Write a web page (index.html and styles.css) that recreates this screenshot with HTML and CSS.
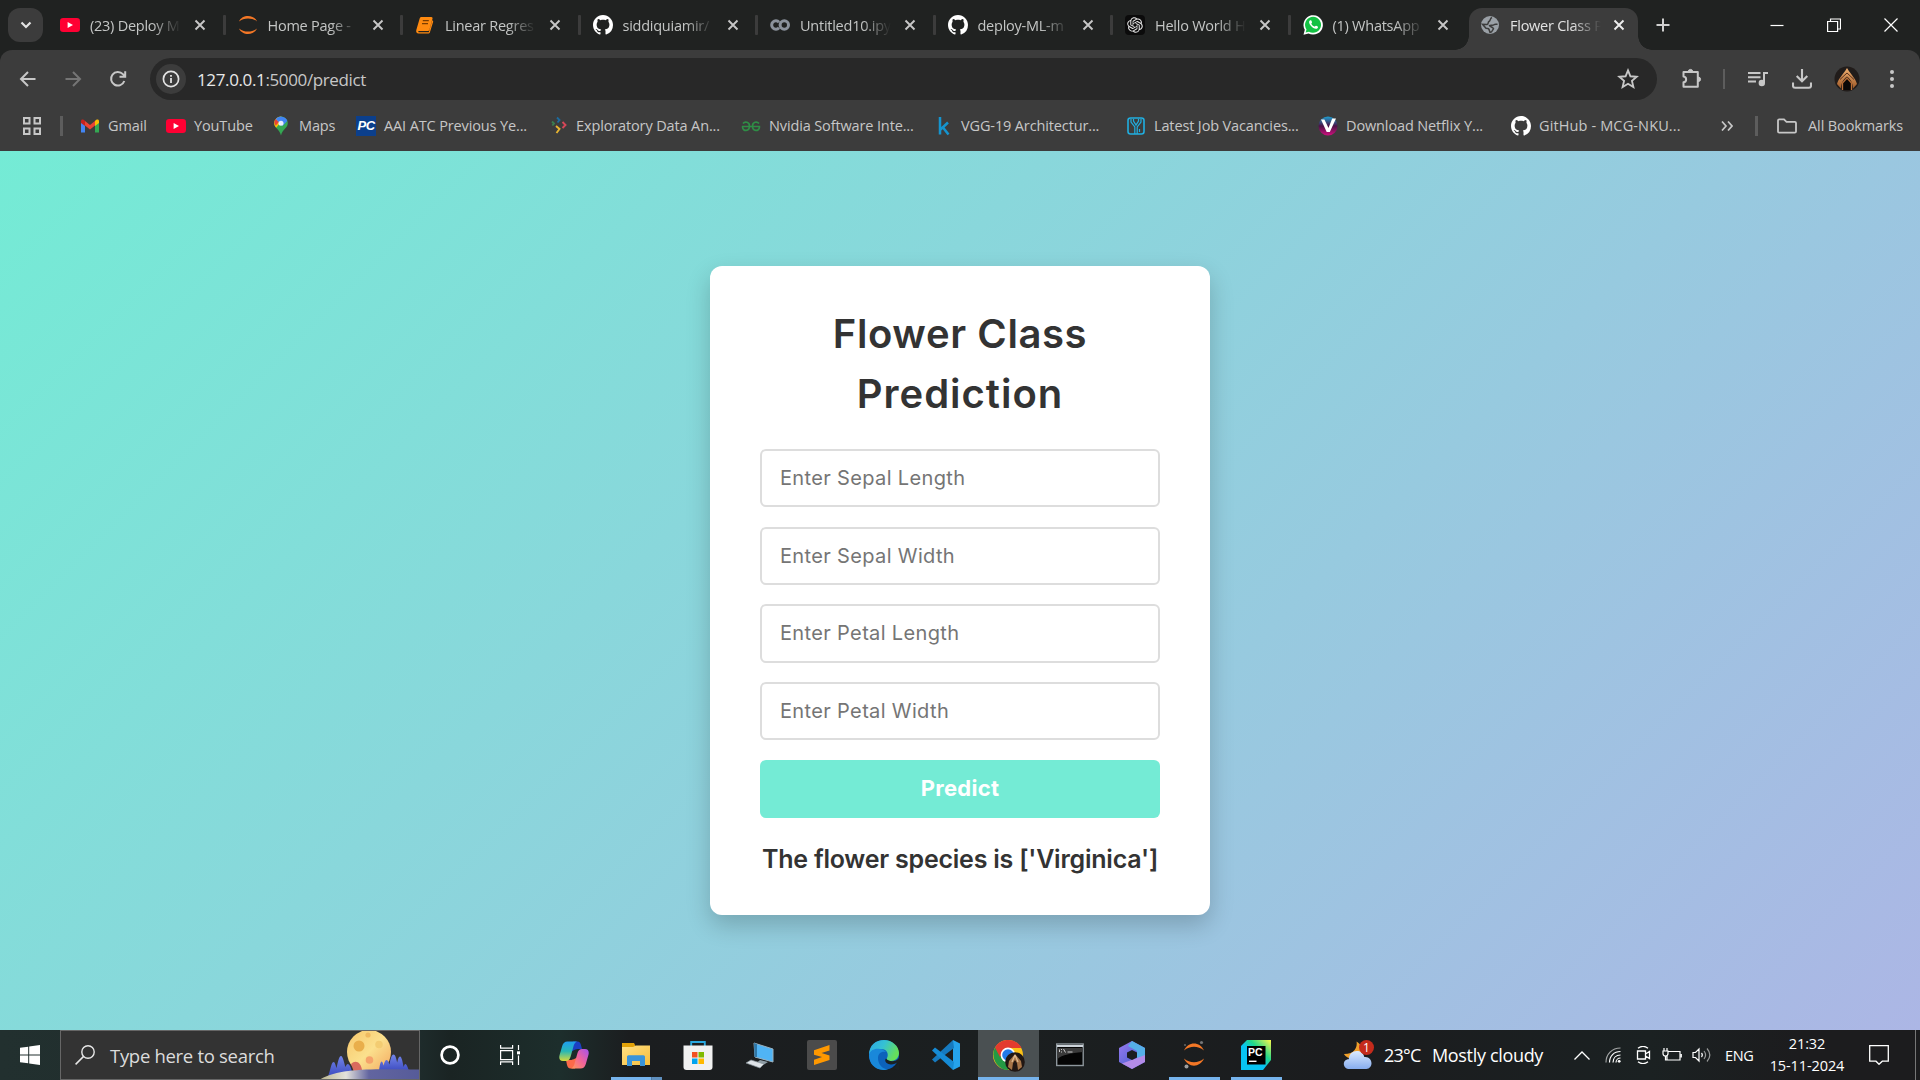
FILE: index.html
```html
<!DOCTYPE html>
<html lang="en">
<head>
<meta charset="utf-8">
<title>Flower Class Prediction</title>
<link rel="stylesheet" href="styles.css">
</head>
<body>
<svg class="defs" width="0" height="0" aria-hidden="true">
  <defs>
    <symbol id="x" viewBox="0 0 12 12"><path d="M1.5 1.5l9 9M10.5 1.5l-9 9" stroke="currentColor" stroke-width="1.9" fill="none"/></symbol>
    <symbol id="youtube" viewBox="0 0 20 20"><rect y="3" width="20" height="14" rx="3.2" fill="#ff0033"/><path d="M7.6 7l5.4 3-5.4 3z" fill="#fff"/></symbol>
    <symbol id="github" viewBox="0 0 16 16"><path fill="#fff" d="M8 0C3.58 0 0 3.58 0 8c0 3.54 2.29 6.53 5.47 7.59.4.07.55-.17.55-.38 0-.19-.01-.82-.01-1.49-2.01.37-2.53-.49-2.69-.94-.09-.23-.48-.94-.82-1.13-.28-.15-.68-.52-.01-.53.63-.01 1.08.58 1.23.82.72 1.21 1.87.87 2.33.66.07-.52.28-.87.51-1.07-1.78-.2-3.64-.89-3.64-3.95 0-.87.31-1.59.82-2.15-.08-.2-.36-1.02.08-2.12 0 0 .67-.21 2.2.82.64-.18 1.32-.27 2-.27s1.36.09 2 .27c1.53-1.04 2.2-.82 2.2-.82.44 1.1.16 1.92.08 2.12.51.56.82 1.27.82 2.15 0 3.07-1.87 3.75-3.65 3.95.29.25.54.73.54 1.48 0 1.07-.01 1.93-.01 2.2 0 .21.15.46.55.38A8.01 8.01 0 0 0 16 8c0-4.42-3.58-8-8-8z"/></symbol>
    <linearGradient id="moon" x1="0" y1="0" x2="1" y2="1"><stop offset="0" stop-color="#f7c66a"/><stop offset=".5" stop-color="#fbe08d"/><stop offset="1" stop-color="#f3a65e"/></linearGradient>
    <linearGradient id="hill" x1="0" y1="0" x2="1" y2="0"><stop offset="0" stop-color="#b9b48a"/><stop offset=".27" stop-color="#e4e2dc"/><stop offset=".5" stop-color="#6265a0"/><stop offset="1" stop-color="#565b99"/></linearGradient>
    <linearGradient id="tree" x1="0" y1="0" x2="0" y2="1"><stop offset="0" stop-color="#7385ea"/><stop offset="1" stop-color="#3d4cc0"/></linearGradient>
    <linearGradient id="cop1" x1="0" y1="0" x2="0" y2="1"><stop offset="0" stop-color="#1f9cf0"/><stop offset=".5" stop-color="#28b7b5"/><stop offset="1" stop-color="#d8d93a"/></linearGradient>
    <linearGradient id="cop2" x1="1" y1="0" x2="0" y2="1"><stop offset="0" stop-color="#a452ef"/><stop offset=".5" stop-color="#f0639b"/><stop offset="1" stop-color="#ff9a55"/></linearGradient>
    <linearGradient id="edge1" x1="0" y1="0" x2="1" y2=".4"><stop offset="0" stop-color="#2ba8e6"/><stop offset=".5" stop-color="#35c1d4"/><stop offset="1" stop-color="#66e05a"/></linearGradient>
    <linearGradient id="m1" x1="0" y1="0" x2="1" y2="1"><stop offset="0" stop-color="#9a7bf0"/><stop offset="1" stop-color="#3558c8"/></linearGradient>
    <linearGradient id="pc" x1="0" y1="1" x2="1" y2="0"><stop offset=".45" stop-color="#07c3f2"/><stop offset=".65" stop-color="#21d789"/><stop offset="1" stop-color="#fcf84a"/></linearGradient>
    <linearGradient id="cloud" x1="0" y1="0" x2="0" y2="1"><stop offset="0" stop-color="#dcebff"/><stop offset="1" stop-color="#86acee"/></linearGradient>
    <linearGradient id="folder" x1="0" y1="0" x2="1" y2="1"><stop offset="0" stop-color="#ffe083"/><stop offset="1" stop-color="#f8be3d"/></linearGradient>
    <linearGradient id="vee" x1="0" y1="0" x2="0" y2="1"><stop offset="0" stop-color="#1d9fd0"/><stop offset=".5" stop-color="#4a1246"/><stop offset="1" stop-color="#d0107e"/></linearGradient>
    <linearGradient id="gold" x1="0" y1="0" x2="0" y2="1"><stop offset="0" stop-color="#f0b070"/><stop offset="1" stop-color="#a05a28"/></linearGradient>
  </defs>
</svg>

<header class="browser">
  <div class="tabstrip">
    <button class="tab-search"><svg width="14" height="14" viewBox="0 0 14 14"><path d="M2.5 4.5L7 9l4.500-4.500" fill="none" stroke="#e3e3e3" stroke-width="2.200"/></svg></button>
    <div class="tab"><svg class="fav"><use href="#youtube"/></svg><span class="tab-title">(23) Deploy M</span><svg class="close"><use href="#x"/></svg></div>
    <div class="tab"><svg class="fav" viewBox="0 0 20 20"><path d="M1 6.500C4-.8 16-.8 19 6.500 14.500 2.400 5.500 2.400 1 6.500zM1 13.500c3 7.300 15 7.300 18 0-4.500 4.100-13.500 4.100-18 0z" fill="#f37726"/></svg><span class="tab-title">Home Page -</span><svg class="close"><use href="#x"/></svg></div>
    <div class="tab"><svg class="fav" viewBox="0 0 20 20"><path d="M6.500 2h9.800c1 0 1.500.8 1.200 1.700L14.400 14.800c-.3.8-.9 1.200-1.800 1.200H3.700c-.8.4-.4 1.300.5 1.300h9.600l3.500-12 .4.300c.5.400.6.900.4 1.500L15 17c-.3 1-1 1.500-2 1.500H3.600C1.800 18.500.7 17 1.300 15L4.600 3.700C4.900 2.600 5.500 2 6.500 2z" fill="#ff8a10"/><path d="M7.800 5.700h6M7 8.700h6" stroke="#7c3c00" stroke-width="1.200"/></svg><span class="tab-title">Linear Regres</span><svg class="close"><use href="#x"/></svg></div>
    <div class="tab"><svg class="fav"><use href="#github"/></svg><span class="tab-title">siddiquiamir/</span><svg class="close"><use href="#x"/></svg></div>
    <div class="tab"><svg class="fav" viewBox="0 0 20 20" fill="none" stroke="#8b929c" stroke-width="3"><path d="M9 7.200A4.200 4.200 0 1 0 9 12.800"/><circle cx="14.300" cy="10" r="4.200"/></svg><span class="tab-title">Untitled10.ipy</span><svg class="close"><use href="#x"/></svg></div>
    <div class="tab"><svg class="fav"><use href="#github"/></svg><span class="tab-title">deploy-ML-m</span><svg class="close"><use href="#x"/></svg></div>
    <div class="tab"><svg class="fav" viewBox="0 0 20 20"><rect width="20" height="20" rx="4" fill="#0b0b0b"/><path transform="translate(2.200 2.200) scale(.65)" fill="#e8e8e8" d="M22.282 9.821a5.985 5.985 0 0 0-.516-4.910 6.046 6.046 0 0 0-6.510-2.900A6.065 6.065 0 0 0 4.981 4.182a5.985 5.985 0 0 0-3.998 2.900 6.046 6.046 0 0 0 .743 7.097 5.980 5.980 0 0 0 .511 4.911 6.051 6.051 0 0 0 6.515 2.900A5.985 5.985 0 0 0 13.260 24a6.056 6.056 0 0 0 5.772-4.206 5.990 5.990 0 0 0 3.998-2.900 6.056 6.056 0 0 0-.748-7.073zm-9.022 12.608a4.476 4.476 0 0 1-2.876-1.041l.142-.080 4.778-2.758a.795.795 0 0 0 .393-.681v-6.737l2.020 1.169a.071.071 0 0 1 .038.052v5.583a4.504 4.504 0 0 1-4.495 4.494zm-9.661-4.125a4.471 4.471 0 0 1-.535-3.014l.142.085 4.783 2.758a.771.771 0 0 0 .781 0l5.843-3.369v2.332a.080.080 0 0 1-.033.062L9.740 19.950a4.499 4.499 0 0 1-6.141-1.646zM2.341 7.896a4.485 4.485 0 0 1 2.366-1.973V11.600a.766.766 0 0 0 .388.677l5.814 3.354-2.020 1.169a.076.076 0 0 1-.071 0l-4.830-2.787A4.504 4.504 0 0 1 2.341 7.872zm16.596 3.856L13.104 8.364 15.119 7.200a.076.076 0 0 1 .071 0l4.830 2.791a4.494 4.494 0 0 1-.677 8.104v-5.677a.790.790 0 0 0-.407-.667zm2.011-3.023l-.142-.085-4.774-2.782a.776.776 0 0 0-.785 0L9.409 9.230V6.897a.066.066 0 0 1 .028-.062l4.830-2.787a4.499 4.499 0 0 1 6.680 4.660zM8.307 12.863l-2.020-1.164a.080.080 0 0 1-.038-.057V6.074a4.499 4.499 0 0 1 7.376-3.454l-.142.081L8.704 5.459a.795.795 0 0 0-.393.681zm1.098-2.365l2.602-1.500 2.607 1.500v2.999l-2.597 1.500-2.607-1.500z"/></svg><span class="tab-title">Hello World H</span><svg class="close"><use href="#x"/></svg></div>
    <div class="tab last"><svg class="fav" viewBox="0 0 20 20"><path d="M.5 19.700L1.800 14.800A9.700 9.700 0 1 1 5.500 18.400z" fill="#fff"/><path d="M2.600 17.600l.9-3.200A8 8 0 1 1 6 16.700z" fill="#13c143"/><path d="M7.200 5.300c-1.700.8-1.500 3 .6 5.400 2.200 2.600 5.500 4.200 6.900 2.200.7-1 .4-1.400-1.500-2.200-.9-.4-1.200 1.100-1.800.9-1.500-.6-2.400-1.500-3-2.800-.3-.5.8-.9.600-1.600-.4-1.600-.9-2.200-1.800-1.900z" fill="#fff"/></svg><span class="tab-title">(1) WhatsApp</span><svg class="close"><use href="#x"/></svg></div>
    <div class="tab active"><svg class="fav" viewBox="0 0 20 20"><circle cx="10" cy="10" r="9" fill="#9aa0a6"/><path d="M12 2.500C9.500 3.500 11 5.500 9 6.500 7.500 7.300 9 9 7 9.500L2.500 9.300l3.500 4c1.500 0 3 .2 3.200 1.700L10 17.500c2.500-.2 2.300-2.500 3.500-3.800C12.500 11.500 9.500 12 9.500 10.500c1.500-1 3 .5 4.500-.8.8-.7 2.200-.2 3.500-.7" fill="none" stroke="#3c3c3c" stroke-width="1.500"/></svg><span class="tab-title">Flower Class P</span><svg class="close"><use href="#x"/></svg></div>
    <svg class="new-tab" viewBox="0 0 14 14"><path d="M7 .5v13M.5 7h13" stroke="#d0d0d0" stroke-width="2"/></svg>
    <div class="window-controls">
      <svg width="14" height="14" viewBox="0 0 14 14"><path d="M.5 7.500h13" stroke="#fff" stroke-width="1.200"/></svg>
      <svg width="14" height="14" viewBox="0 0 14 14"><path d="M.6 3.500h10v10h-10zM3.500 3.500V1h10v10h-3" fill="none" stroke="#fff" stroke-width="1.200"/></svg>
      <svg width="14" height="14" viewBox="0 0 14 14"><path d="M.5.500l13 13M13.500.500l-13 13" stroke="#fff" stroke-width="1.200"/></svg>
    </div>
  </div>

  <div class="toolbar">
    <div class="nav">
      <svg width="20" height="20" viewBox="0 0 20 20"><path d="M17.500 10H3.500M10 3L3 10l7 7" fill="none" stroke="#c7c7c7" stroke-width="2"/></svg>
      <svg width="20" height="20" viewBox="0 0 20 20"><path d="M2.500 10h14M10 3l7 7-7 7" fill="none" stroke="#757575" stroke-width="2"/></svg>
      <svg width="20" height="20" viewBox="0 0 20 20"><path d="M16.300 12A6.800 6.800 0 1 1 14.900 5.200L17 7.500M17.200 2.200V7.800H11.500" fill="none" stroke="#c7c7c7" stroke-width="2"/></svg>
    </div>
    <div class="omnibox">
      <span class="info"><svg width="18" height="18" viewBox="0 0 18 18"><circle cx="9" cy="9" r="7.600" fill="none" stroke="#e3e3e3" stroke-width="1.700"/><path d="M9 8v5M9 4.900v1.900" stroke="#e3e3e3" stroke-width="1.800"/></svg></span>
      <span class="url"><b>127.0.0.1</b>:5000/predict</span>
      <svg class="star" viewBox="0 0 20 20"><path d="M10 2.200l2.200 5.300 5.700.5-4.300 3.700 1.300 5.600-4.900-3-4.900 3 1.300-5.600L2.100 8l5.700-.5z" fill="none" stroke="#c7c7c7" stroke-width="1.700"/></svg>
    </div>
    <div class="actions">
      <svg class="puzzle" viewBox="0 0 22 22"><path d="M2.500 4h14.300v14.800H2.500v-4.500c3.500-.5 3.500-5.200 0-5.700z" fill="none" stroke="#c7c7c7" stroke-width="2" stroke-linejoin="round"/><path d="M7.200 4a2.300 2.600 0 0 1 4.600 0zM17 9a2.600 2.300 0 0 1 0 4.600z" fill="#c7c7c7" stroke="#c7c7c7"/></svg>
      <span class="rule"></span>
      <svg class="media" viewBox="0 0 20 18"><path d="M0 3h12.500M0 7.200h12.500M0 11.400h8M16 13V3h4" fill="none" stroke="#c7c7c7" stroke-width="2"/><circle cx="13.800" cy="13" r="3.200" fill="#c7c7c7"/></svg>
      <svg class="download" viewBox="0 0 20 20"><path d="M10 0v12M4.700 7l5.300 5.300L15.300 7M1 13.500v3.200c0 1.300.8 2 2 2h14c1.200 0 2-.7 2-2v-3.200" fill="none" stroke="#c7c7c7" stroke-width="2.100"/></svg>
      <svg class="avatar" viewBox="0 0 26 26"><circle cx="13" cy="13" r="12.500" fill="#211c1a"/><path d="M13 2C9 9 4.500 12 3 18l4 4.500C7 17 9.500 13 13 10.500c3.500 2.500 6 6.500 6 12l4-4.500C21.500 12 17 9 13 2z" fill="url(#gold)"/><path d="M8.500 24v-7l4.500-5 4.500 5v7" fill="#0b0807" stroke="#b96d36" stroke-width="1.300"/><path d="M6 13.500L13 7l7 6.500" fill="none" stroke="#4c2818" stroke-width=".9"/></svg>
      <svg class="dots" viewBox="0 0 6 20" fill="#c7c7c7"><circle cx="3" cy="3" r="2"/><circle cx="3" cy="10" r="2"/><circle cx="3" cy="17" r="2"/></svg>
    </div>
  </div>

  <nav class="bookmarks">
    <svg class="apps" viewBox="0 0 18 18" fill="none" stroke="#c7c7c7" stroke-width="2"><path d="M1 1h5.500v5.500H1zM11.500 1H17v5.500h-5.500zM1 11.500h5.500V17H1zM11.500 11.500H17V17h-5.500z"/></svg>
    <span class="rule thick"></span>
    <a class="bm w86"><svg viewBox="0 0 20 20"><path d="M1 5v11.500h4V9z" fill="#4285f4"/><path d="M19 5v11.500h-4V9z" fill="#34a853"/><path d="M5 9.500V5l5 3.900L15 5v4.500l-5 4z" fill="#ea4335"/><path d="M15 5v5l4-3V5.200c0-2-2.200-2.400-4-.2z" fill="#fbbc04"/><path d="M5 5v5L1 7V5.200c0-2 2.200-2.400 4-.2z" fill="#c5221f"/></svg>Gmail</a>
    <a class="bm w105"><svg><use href="#youtube"/></svg>YouTube</a>
    <a class="bm w85"><svg viewBox="0 0 20 20"><path d="M10 .5A6.800 6.800 0 0 0 3.200 7.300C3.200 12 8.500 13 10 19.500 11.500 13 16.800 12 16.800 7.300A6.800 6.800 0 0 0 10 .5z" fill="#34a853"/><path d="M3.200 7.300c0 2 .9 3.300 2 4.500L12.500 3 10 .5a6.800 6.800 0 0 0-6.800 6.800z" fill="#fbbc04"/><path d="M4.800 3L8 6l-3.200 3.400C2.700 7 3.300 4.500 4.800 3z" fill="#ea4335"/><path d="M4.800 3A6.800 6.800 0 0 1 16.300 4.900L11.500 10 4.800 3z" fill="#4285f4"/><circle cx="10" cy="7.200" r="2.500" fill="#e8eefc"/></svg>Maps</a>
    <a class="bm w192"><span class="pc-badge">PC</span>AAI ATC Previous Ye...</a>
    <a class="bm w193"><svg viewBox="0 0 20 20" fill="none" stroke-width="1.900"><path d="M9 1.500L11.500 4 9.500 6.500" stroke="#1d6b9e"/><path d="M4 5.500L6 7.500 4.300 9.500" stroke="#3a7d4f"/><path d="M14.500 6l3 3-3 3" stroke="#d64758"/><path d="M8 10l3.500 3-3 4" stroke="#e8b531"/></svg>Exploratory Data An...</a>
    <a class="bm w192"><svg viewBox="0 0 20 20" fill="none" stroke="#2f8d46" stroke-width="1.700"><path d="M.8 10.500h18.400M2 7.500c2-2.500 6.500-1.500 6.500 2.500 0 5.500-6.500 6-7 1M18 7.500c-2-2.500-6.500-1.500-6.500 2.500 0 5.500 6.500 6 7 1"/></svg>Nvidia Software Inte...</a>
    <a class="bm w193"><svg viewBox="0 0 20 20"><path d="M7 1v17.500M15 6.500l-7.500 7M10 11.500l5.500 7" fill="none" stroke="#1594ce" stroke-width="2.500"/></svg>VGG-19 Architectur...</a>
    <a class="bm w192"><svg viewBox="0 0 20 20" fill="none" stroke="#20aee0"><rect x="2" y="2" width="16" height="16" rx="2.500" stroke-width="1.600"/><path d="M5 3v3l3.800 5v7M15 3v3l-3.800 5v7M7.500 3v2l2.500 4 2.500-4V3M13.500 13v3" stroke-width="1.200"/></svg>Latest Job Vacancies...</a>
    <a class="bm w193"><svg viewBox="0 0 20 20"><circle cx="10" cy="10" r="9.500" fill="url(#vee)"/><path d="M3 3.500h3.400L10.500 12l3.700-9.500H18L11.800 16H8.700z" fill="#fff"/></svg>Download Netflix Y...</a>
    <a class="bm w196 wide"><svg><use href="#github"/></svg>GitHub - MCG-NKU...</a>
    <div class="bm-end">
      <svg class="more" viewBox="0 0 12 10"><path d="M1 .5L5 5 1 9.500M7 .5L11 5 7 9.500" fill="none" stroke="#c7c7c7" stroke-width="1.700"/></svg>
      <span class="rule thick"></span>
      <a class="bm"><svg viewBox="0 0 20 20"><path d="M1 4.500c0-.8.400-1.200 1.200-1.200H7l2.500 2.500h8.300c.8 0 1.200.4 1.200 1.200v8.500c0 .8-.4 1.200-1.200 1.200H2.200c-.8 0-1.200-.4-1.200-1.200z" fill="none" stroke="#c7c7c7" stroke-width="1.800"/></svg>All Bookmarks</a>
    </div>
  </nav>
</header>

<main class="page">
  <section class="card">
    <h1>Flower Class<br><span>Prediction</span></h1>
    <form class="form">
      <input type="text" placeholder="Enter Sepal Length">
      <input type="text" placeholder="Enter Sepal Width">
      <input type="text" placeholder="Enter Petal Length">
      <input type="text" placeholder="Enter Petal Width">
      <button type="button">Predict</button>
    </form>
    <p class="result">The flower species is ['Virginica']</p>
  </section>
</main>

<footer class="taskbar">
  <div class="start"><svg width="20" height="20" viewBox="0 0 20 20" fill="#fff"><path d="M0 2.800L8.200 1.700V9.500H0zM9.200 1.500L20 0v9.500H9.200zM0 10.500h8.200v7.800L0 17.200zM9.200 10.500H20V20L9.200 18.500z"/></svg></div>
  <div class="search">
    <svg class="lens" viewBox="0 0 20 20"><circle cx="13" cy="7" r="6.200" fill="none" stroke="#e8e8e8" stroke-width="1.400"/><path d="M8.600 11.400L.6 19.400" stroke="#e8e8e8" stroke-width="1.500"/></svg>
    <span>Type here to search</span>
    <svg class="scene" viewBox="0 0 100 50"><circle cx="50" cy="22" r="22" fill="url(#moon)"/><circle cx="40" cy="16" r="5.500" fill="#e9ae4b"/><circle cx="60" cy="14.500" r="3.800" fill="#f3cc72"/><circle cx="49" cy="5" r="2.600" fill="#efb95f"/><circle cx="50.500" cy="30" r="3.800" fill="#f5a36a"/><path d="M32 34c5-5 10-1 11 6l-8 2z" fill="#da6a5d"/><path d="M9 46c2-3 3-14 5.500-14 1.500 0 2 3 3 6 1.500-6 2.500-12 4.500-12s3 7 4.500 11c2-6 5-3 7 7z" fill="url(#tree)"/><path d="M60 41c.8-6 1.500-9.500 2.600-9.500S64 34 64.500 35.500C65.500 32 66.300 30 67.700 30c1.300 0 2 2.500 2.800 4.500C71.500 29 72.500 24.500 74.500 24.500s2.800 4.500 3.700 8c.8-3.500 1.300-6 2.800-6 1.800 0 2.700 6 3.700 10.500.5-2 1-3 1.800-3 1.200 0 2.500 4 3.500 7z" fill="url(#tree)"/><path d="M0 50C20 38 50 39 100 39.500V50z" fill="url(#hill)"/></svg>
  </div>
  <div class="sys"><svg width="20" height="20" viewBox="0 0 20 20"><circle cx="10" cy="10" r="8.400" fill="none" stroke="#fff" stroke-width="2.700"/></svg></div>
  <div class="sys"><svg width="20" height="20" viewBox="0 0 20 20" fill="none" stroke="#fff" stroke-width="1.200"><path d="M.6 5.600h12v9H.6zM.6 0v3.200h12V0M.6 20v-3.200h12V20M18.500 0v5M18.500 10.500V20"/><path d="M17 6.300h3v3h-3z" fill="#fff" stroke="none"/></svg></div>
  <div class="apps-row">
    <div class="app"><svg viewBox="0 0 30 30"><path d="M14 1.500h4.500c2 0 3 1.500 3.600 4L23 9h-4c-4 0-6 3-8 3z" fill="#1b3fc4"/><path d="M16 28.500h-4.500c-2 0-3-1.500-3.600-4L7 20h4c4 0 6-2.500 8-2.500z" fill="#fb6a4a"/><path d="M8.500 1.500H18c-2 .8-3 2.800-3.700 5.500L11.500 17c-.8 2.600-2.300 4-4.500 4H4c-3.500 0-4.300-2.600-3.400-6L3.200 6c.9-3 2.500-4.500 5.300-4.500z" fill="url(#cop1)"/><path d="M21.500 28.500H12c2-.8 3-2.800 3.700-5.500L18.500 13c.8-2.600 2.300-4 4.500-4h3c3.500 0 4.300 2.600 3.400 6L26.800 24c-.9 3-2.500 4.500-5.300 4.500z" fill="url(#cop2)"/></svg></div>
    <div class="app open multi"><svg viewBox="0 0 30 30"><path d="M1 3h12l2 4v4H1z" fill="#e2a208"/><path d="M1 7h11l3-1.500h14V25H1z" fill="url(#folder)"/><path d="M6 17c0-1 .6-1.700 1.600-1.700h14.800c1 0 1.600.7 1.600 1.700v9h-5v-5h-8v5H6z" fill="#3a94da"/></svg></div>
    <div class="app"><svg viewBox="0 0 30 30"><path d="M8.200 6V2h13.600v4" fill="none" stroke="#29a8e0" stroke-width="1.900"/><path d="M.5 5.500h29V27c0 2-1 3-3 3h-23c-2 0-3-1-3-3z" fill="#f1f1f1"/><path d="M9 12h5.500v5.500H9z" fill="#f25022"/><path d="M15.500 12H21v5.500h-5.500z" fill="#7fba00"/><path d="M9 18.500h5.500V24H9z" fill="#00a4ef"/><path d="M15.500 18.500H21V24h-5.500z" fill="#ffb900"/></svg></div>
    <div class="app"><svg viewBox="0 0 30 30"><path d="M9 3l19 6v13L10 17z" fill="#50b4f5" stroke="#9bb2c0"/><path d="M9 3l3 1v13l-2.500 0z" fill="#2f77a7"/><path d="M15 20l8 2-4 2.500-7-2z" fill="#8e9da5"/><path d="M6 20l13 4-4 4L1 23z" fill="#dfe4e8" stroke="#87929a" stroke-width=".7"/></svg></div>
    <div class="app"><svg viewBox="0 0 30 30"><rect width="30" height="30" rx="2" fill="#4b4b4b"/><path d="M7 10.300L22.500 5v5.500l-8 2.500 8 2.500V20L7 25v-5.300l8-2.700-8-2.200z" fill="#ff9800"/></svg></div>
    <div class="app"><svg viewBox="0 0 30 30"><circle cx="15" cy="15" r="15" fill="#0c62bb"/><path d="M0 15C0 5 7 0 15 0s15 6 15 13c0 5-4 8-8 8-3 0-5-1-4-3 2-4 0-9-6-9C6 9 1 12 0 15z" fill="url(#edge1)"/><path d="M0 15c1-5 6-7 11-6 3 0 5 2 6 3-5-1-8 2-8 6 0 6 4 11 10 11.500C8 32 0 25 0 15z" fill="#1988da"/><path d="M17 18.500c-2 2 0 6 5 6 3 0 5-1 7-2.500 1.500 0-1 4-5 6l8 4V17l-3 2c-3 3-9 3-12-.5z" fill="#1b2123"/></svg></div>
    <div class="app"><svg viewBox="0 0 30 30"><path d="M22 0l7 3.500v23L22 30z" fill="#25a3ec"/><path d="M22 0L1 19.500l3 3L23 8z" fill="#167abf"/><path d="M22 30L1 10.500l3-3L23 22z" fill="#168bd5"/></svg></div>
    <div class="app open current"><svg viewBox="0 0 32 32"><circle cx="15" cy="15" r="15" fill="#fbc116"/><path d="M15 15L2 7.500C7-2 23-3 28.500 8H15z" fill="#e33b2e"/><path d="M15 15L2 7.500C-3 17 4 30 15 30l6-11z" fill="#249944"/><path d="M15 8H2.200L7 17z" fill="#e33b2e"/><circle cx="15" cy="15" r="7.400" fill="#fff"/><circle cx="15" cy="15" r="5.800" fill="#2379e8"/><circle cx="22" cy="22" r="9.800" fill="#211713"/><path d="M22 14l-6 7-1 6 4 3 1-7 2-3 2 3 1 7 4-3-1-6z" fill="#a77548"/><path d="M22 15l-3 7M22 15l3 7" stroke="#dfbb91" stroke-width="1.300"/></svg></div>
    <div class="app"><svg viewBox="0 0 30 30"><rect x="1.700" y="4" width="26.500" height="21.500" fill="#050505" stroke="#8d969c" stroke-width="1.400"/><path d="M2 5h26v2H2z" fill="#cdd4da"/><path d="M2.500 8h25v4C16 13 7 15 2.500 19z" fill="#3a3a3a"/><path d="M4.500 9.500v2.500M6.500 9v1M6.500 11.500v1M8.500 9l2 3.500M12.500 12h5" stroke="#ddd" stroke-width=".9"/></svg></div>
    <div class="app"><svg viewBox="0 0 30 30"><path d="M15 1l13 7v14l-13 7-13-7V8z" fill="url(#m1)"/><path d="M15 1l13 7v14l-8-4v-7L11 6z" fill="#55afe8"/><path d="M28 22l-13 7-10-5.500L20 18l8-3z" fill="#b38be8"/><path d="M15 10l5 2.500v5L15 20l-5-2.500v-5z" fill="#1b1d1f"/></svg></div>
    <div class="app open"><svg viewBox="0 0 30 30"><path d="M5 10.500C9 1 21 1 25 10.500 19 5.500 11 5.500 5 10.500zM5 18.500c4 9.500 16 9.500 20 0-6 5-14 5-20 0z" fill="#f37726"/><circle cx="22.500" cy="2.500" r="1.600" fill="#767677"/><circle cx="6" cy="5" r="1.100" fill="#616262"/><circle cx="7.500" cy="26.500" r="2" fill="#9e9e9e"/></svg></div>
    <div class="app open"><span class="pycharm"><svg viewBox="0 0 30 30"><path d="M6 0h24v20l-8 10H0V6z" fill="url(#pc)"/><path d="M6 6h18.500v18.500H6z" fill="#000"/><path d="M8 21.300h7.500" stroke="#fff" stroke-width="1.400"/></svg><b>PC</b></span></div>
  </div>
  <div class="weather">
    <span class="weather-icon"><svg viewBox="0 0 32 30"><path d="M14 1c1 6-2 13-13 13 3 6 15 7 18 0 2-5 0-10-5-13z" fill="#f0a02b"/><path d="M7 29.500c-8 0-8-10-1-10C6 9 20 8 22 17c9-1 10 12 2 12.500z" fill="url(#cloud)"/></svg><i>1</i></span>
    <span class="temp">23°C</span><span class="sky">Mostly cloudy</span>
  </div>
  <div class="tray">
    <svg class="up" viewBox="0 0 16 9"><path d="M.5 8.500L8 1l7.500 7.500" fill="none" stroke="#fff" stroke-width="1.300"/></svg>
    <svg class="wifi" viewBox="0 0 16 16" fill="none" stroke="#fff" stroke-width="1.200"><path d="M1 15.500C1 7 7 1 15.500 1" opacity=".6"/><path d="M4.500 15.500c0-6.500 4.500-11 11-11M8 15.500c0-4.500 3-7.500 7.500-7.500M11 15.500c0-2.500 2-4.500 4.500-4.500"/><circle cx="14.200" cy="14.300" r="1.400" fill="#fff" stroke="none"/></svg>
    <svg class="cam" viewBox="0 0 15 18" fill="none" stroke="#fff" stroke-width="1.300"><path d="M1.500 5h8v8h-8zM9.500 8l4-2.500v7L9.500 10M2 2.200C5 0 9 0 12 2.200M2 15.800c3 2.200 7 2.200 10 0"/></svg>
    <svg class="battery" viewBox="0 0 20 14" fill="none" stroke="#fff" stroke-width="1.200"><path d="M6 3.500h12v8.500H5V8M19.300 6v3.500M1 3h5v2.500a2.500 2.500 0 0 1-5 0zM2 0v3M5 0v3M3.500 8v4h2"/></svg>
    <svg class="sound" viewBox="0 0 20 16" fill="none" stroke="#fff" stroke-width="1.200"><path d="M1 5.500h2.500L7 2v12l-3.500-3.500H1zM9.500 6c1 1.200 1 2.800 0 4"/><path d="M12 4c2 2.500 2 5.500 0 8M15 1.500c3.500 4 3.500 9 0 13" opacity=".55"/></svg>
    <span class="lang">ENG</span>
    <div class="clock"><span>21:32</span><span>15-11-2024</span></div>
    <svg class="note" viewBox="0 0 20 20"><path d="M.7.700h18.600v15.500h-6L10 19.300l-3-3.100H.7z" fill="none" stroke="#fff" stroke-width="1.300"/></svg>
  </div>
</footer>
</body>
</html>
```

FILE: styles.css
```css
* { box-sizing: border-box; }

body {
  margin: 0;
  width: 1920px;
  height: 1080px;
  overflow: hidden;
  display: flex;
  flex-direction: column;
  font-family: "Open Sans", "Noto Sans", sans-serif;
}

svg { display: block; flex: none; }
.defs { position: absolute; }

/* Browser chrome */
.browser { height: 151px; background: #202221; color: #c7c7c7; flex: none; }

.tabstrip { height: 50px; display: flex; align-items: center; }
.tab-search {
  width: 35px; height: 34px; margin: 0 3px 0 8px; padding: 0;
  border: 0; border-radius: 12px; background: #3c3c3c;
  display: flex; align-items: center; justify-content: center;
}
.tab {
  width: 177.500px; height: 50px; flex: none;
  display: flex; align-items: center;
  padding-left: 14px;
  position: relative;
}
.tab::after { content: ""; width: 3px; height: 20px; margin-left: 16.500px; background: #3c3c3c; border-radius: 1px; flex: none; }
.fav { width: 20px; height: 20px; }
.tab-title {
  width: 92px; flex: none; margin: 1px 0 0 10px; white-space: nowrap;
  font-size: 14.500px; letter-spacing: -.25px; color: #c4c6c5;
  -webkit-mask-image: linear-gradient(to right, #000 62px, transparent 91px);
  mask-image: linear-gradient(to right, #000 62px, transparent 91px);
}
.close { width: 12px; height: 12px; margin-left: 12px; color: #c7c7c7; }
.tab.last::after { visibility: hidden; }
.tab.active {
  margin-left: 3px; width: 169px; height: 42px; align-self: flex-end;
  padding: 0 0 8px 11px; background: #3c3c3c; border-radius: 13px 13px 0 0;
}
.tab.active .tab-title { color: #e3e3e3; }
.tab.active .close { color: #eee; margin-left: 11px; }
.tab.active::before, .tab.active::after {
  content: ""; position: absolute; bottom: 0; width: 14px; height: 14px; margin: 0; border-radius: 0;
}
.tab.active::before { left: -14px; background: radial-gradient(circle at 0 0, #202221 13.500px, #3c3c3c 14px); }
.tab.active::after { right: -14px; background: radial-gradient(circle at 100% 0, #202221 13.500px, #3c3c3c 14px); }
.new-tab { width: 14px; height: 14px; margin-left: 18px; }
.window-controls { margin-left: auto; display: flex; gap: 43px; padding-right: 22px; }

.toolbar {
  height: 58px; background: #3c3c3c; border-radius: 12px 12px 0 0;
  display: flex; align-items: center;
}
.nav { width: 150px; display: flex; gap: 25px; padding-left: 18px; }
.omnibox {
  width: 1507px; height: 42px; border-radius: 21px; background: #282828;
  display: flex; align-items: center; padding: 0 18px 0 6px;
}
.info { width: 30px; height: 30px; border-radius: 50%; background: #3c3c3c; display: flex; align-items: center; justify-content: center; }
.url { margin-left: 11px; font-size: 17px; letter-spacing: -.37px; color: #c7c7c7; }
.url b { font-weight: 400; color: #e8e8e8; }
.star { width: 22px; height: 22px; margin-left: auto; }
.actions { display: flex; align-items: center; padding-left: 24px; }
.puzzle { width: 22px; height: 22px; }
.actions .rule { margin: 0 23px 0 20px; }
.rule { width: 2px; height: 20px; background: #5d5d5d; flex: none; }
.rule.thick { width: 3px; }
.media { width: 20px; height: 18px; }
.download { width: 20px; height: 20px; margin-left: 24px; }
.avatar { width: 26px; height: 26px; margin-left: 22px; }
.dots { width: 6px; height: 20px; margin-left: 29px; }

.bookmarks {
  height: 43px; background: #3c3c3c; padding: 0 17px 7px 23px;
  display: flex; align-items: center;
}
.apps { width: 18px; height: 18px; }
.apps + .rule { margin: 0 17px 0 19px; }
.bm {
  display: flex; align-items: center; gap: 8px; flex: none;
  font-size: 14.500px; line-height: 18px; padding-bottom: 1px; letter-spacing: -.13px; white-space: nowrap;
}
.bm svg { width: 20px; height: 20px; margin-top: 1px; }
.bm.wide { letter-spacing: .13px; }
.w85 { width: 85px; } .w86 { width: 86px; } .w105 { width: 105px; }
.w192 { width: 192px; } .w193 { width: 193px; } .w196 { width: 196px; }
.pc-badge {
  width: 20px; height: 20px; margin-top: 1px; background: #0b3f8c; color: #fff; text-align: center;
  font: italic 700 13px/19px "Liberation Sans", sans-serif; letter-spacing: -.5px;
}
.bm-end { display: flex; align-items: center; margin-left: auto; }
.more { width: 12px; height: 10px; margin-right: 22px; }
.bm-end .rule { margin-right: 19px; }
.bm-end .bm { gap: 11px; }

/* Web page */
.page {
  flex: 1; display: flex; align-items: center; justify-content: center;
  background: linear-gradient(135deg, #74ebd5, #acb6e5);
  font-family: "Inter", sans-serif;
}
.card {
  width: 500px; height: 649px; padding: 38px 50px 0;
  background: #fff; border-radius: 12px;
  box-shadow: 0 10px 25px rgba(0, 0, 0, .2);
  text-align: center; color: #333;
}
h1 { margin: 0 0 25px; font-size: 40px; line-height: 60px; font-weight: 600; letter-spacing: .6px; }
h1 span { letter-spacing: 1px; }
.form { display: grid; grid-auto-rows: 58.200px; gap: 19.500px; }
.form input {
  width: 100%; padding: 0 18px; border: 2px solid #ddd; border-radius: 6px;
  font: 400 20px "Inter", sans-serif; letter-spacing: .35px; background: #fff;
}
.form input::placeholder { color: #757575; }
.form button {
  border: 0; border-radius: 6px; background: #74ebd5; color: #fff;
  font: 700 22px "Inter", sans-serif; letter-spacing: .3px; padding-bottom: 3px;
}
.result { margin: 22px 0 0; font-size: 25px; line-height: 38px; font-weight: 600; letter-spacing: -.23px; white-space: nowrap; }

/* Taskbar */
.taskbar {
  height: 50px; flex: none; display: flex; align-items: center; color: #fff;
  background: linear-gradient(90deg, #22302f 0, #1e2b2b 420px, #1a2423 450px, #1d2e2c 560px, #1b1d1f 630px, #1b1f20 1000px, #1b1c1e 1350px, #1b2122 1650px, #1c1c1e 1800px);
  border-right: 4px solid #1c1c1e; box-shadow: inset -1px 0 #777;
}
.start, .sys { width: 60px; height: 50px; display: flex; align-items: center; justify-content: center; }
.search {
  width: 360px; height: 50px; background: #333; border: 1px solid #666; overflow: hidden;
  display: flex; align-items: center; font-size: 18.500px; letter-spacing: -.3px; color: #dcdcdc;
}
.lens { width: 20px; height: 20px; margin: 0 15px 0 14px; }
.scene { width: 100px; height: 50px; margin-left: auto; }
.apps-row { display: flex; margin-left: 3px; }
.app { width: 62px; height: 50px; display: flex; align-items: center; justify-content: center; position: relative; }
.app svg { width: 30px; height: 30px; }
.app.open::after { content: ""; position: absolute; left: 6px; width: 51px; bottom: 0; height: 3px; background: #76b3ec; }
.app.multi::after { background: linear-gradient(90deg, #76b3ec 40px, #44658a 40px, #5f8fbe 41px); }
.app.current { width: 61px; margin-left: 1px; background: #4a5052; }
.app.current::after { left: 0; width: 61px; }
.app.current svg { width: 32px; height: 32px; margin: 2px 0 0 1px; }
.pycharm { position: relative; }
.pycharm b { position: absolute; left: 7px; top: 6px; font: 700 10.500px/12px "Liberation Sans", sans-serif; }

.weather { display: flex; align-items: center; margin-left: 56px; font-size: 18px; white-space: nowrap; }
.weather-icon { position: relative; }
.weather-icon svg { width: 31px; height: 30px; }
.weather-icon i {
  position: absolute; right: 0; top: 0; width: 15px; height: 15px; border-radius: 50%;
  background: #c42b1c; font: 400 12px/15px "Open Sans", sans-serif; text-align: center;
}
.temp { width: 38px; margin: 0 10px; letter-spacing: -.8px; }
.sky { width: 112px; letter-spacing: -.33px; }
.tray { display: flex; align-items: center; margin-left: auto; padding-right: 27px; }
.up { width: 16px; height: 9px; margin-right: 15px; }
.wifi { width: 16px; height: 16px; margin-right: 15px; }
.cam { width: 15px; height: 18px; margin-right: 11px; }
.battery { width: 20px; height: 14px; margin-right: 10px; }
.sound { width: 20px; height: 16px; margin-right: 13px; }
.lang { width: 30px; font-size: 14.500px; letter-spacing: -.4px; }
.clock {
  width: 76px; margin: 0 24px 0 14px; display: flex; flex-direction: column;
  font-size: 14.500px; line-height: 22px; text-align: center; letter-spacing: -.1px; white-space: nowrap;
}
.note { width: 20px; height: 20px; }
```
